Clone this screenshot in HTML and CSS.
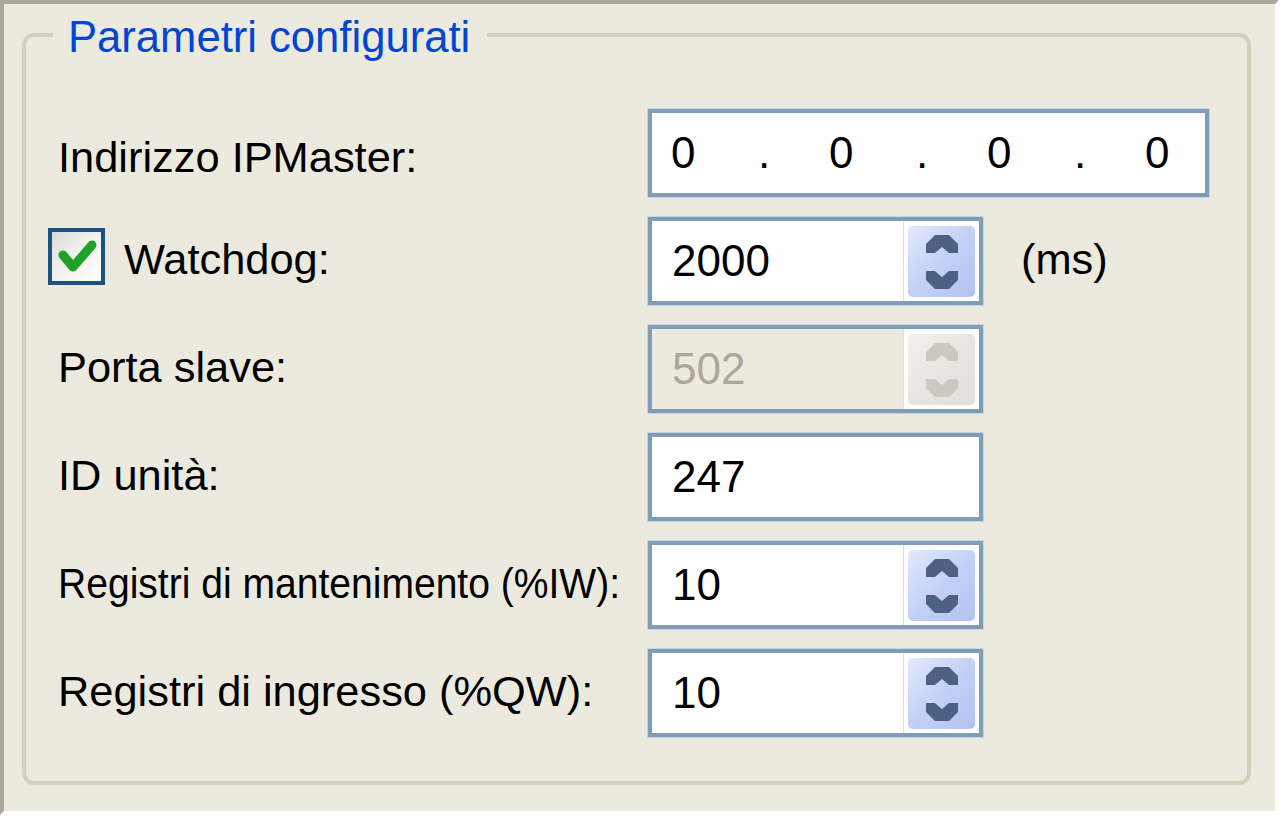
FILE: index.html
```html
<!DOCTYPE html>
<html lang="it">
<head>
    <meta charset="UTF-8">
    <meta name="viewport" content="width=device-width, initial-scale=1.0">
    <title>Parametri configurati</title>
    <link rel="stylesheet" href="styles.css">
</head>
<body>
    <div class="panel">
        <fieldset class="group">
            <legend>Parametri configurati</legend>
            <div class="form">
                <!-- IP master -->
                <div class="label label-first">Indirizzo IPMaster:</div>
                <div class="field field-ip">
                    <span class="octet">0</span><span class="dot">.</span>
                    <span class="octet">0</span><span class="dot">.</span>
                    <span class="octet">0</span><span class="dot">.</span>
                    <span class="octet">0</span>
                </div>

                <!-- watchdog -->
                <div class="label label-check">
                    <span class="checkbox">
                        <svg viewBox="0 0 49 49"><polyline points="11,23 21,35 40,13"/></svg>
                    </span>
                    Watchdog:
                </div>
                <div class="field-row">
                    <div class="field spinner">
                        <div class="field-text">2000</div>
                        <div class="spin">
                            <div class="spin-btn">
                                <svg viewBox="0 0 32 18"><polygon points="0,9 9,0 23,0 32,9 32,18 23,18 16,12 9,18 0,18"/></svg>
                                <svg viewBox="0 0 32 18"><polygon points="0,0 9,0 16,6 23,0 32,0 32,9 23,18 9,18 0,9"/></svg>
                            </div>
                        </div>
                    </div>
                    <span class="unit">(ms)</span>
                </div>

                <!-- porta slave (disabled) -->
                <div class="label">Porta slave:</div>
                <div class="field spinner disabled">
                    <div class="field-text">502</div>
                    <div class="spin">
                        <div class="spin-btn">
                            <svg viewBox="0 0 32 18"><polygon points="0,9 9,0 23,0 32,9 32,18 23,18 16,12 9,18 0,18"/></svg>
                            <svg viewBox="0 0 32 18"><polygon points="0,0 9,0 16,6 23,0 32,0 32,9 23,18 9,18 0,9"/></svg>
                        </div>
                    </div>
                </div>

                <!-- unit id -->
                <div class="label">ID unità:</div>
                <div class="field field-plain">
                    <div class="field-text">247</div>
                </div>

                <!-- holding registers -->
                <div class="label"><span class="label-narrow">Registri di mantenimento (%IW):</span></div>
                <div class="field spinner">
                    <div class="field-text">10</div>
                    <div class="spin">
                        <div class="spin-btn">
                            <svg viewBox="0 0 32 18"><polygon points="0,9 9,0 23,0 32,9 32,18 23,18 16,12 9,18 0,18"/></svg>
                            <svg viewBox="0 0 32 18"><polygon points="0,0 9,0 16,6 23,0 32,0 32,9 23,18 9,18 0,9"/></svg>
                        </div>
                    </div>
                </div>

                <!-- input registers -->
                <div class="label">Registri di ingresso (%QW):</div>
                <div class="field spinner">
                    <div class="field-text">10</div>
                    <div class="spin">
                        <div class="spin-btn">
                            <svg viewBox="0 0 32 18"><polygon points="0,9 9,0 23,0 32,9 32,18 23,18 16,12 9,18 0,18"/></svg>
                            <svg viewBox="0 0 32 18"><polygon points="0,0 9,0 16,6 23,0 32,0 32,9 23,18 9,18 0,9"/></svg>
                        </div>
                    </div>
                </div>
            </div>
        </fieldset>
    </div>
</body>
</html>
```

FILE: styles.css
```css
* {
    box-sizing: border-box;
}
body {
    margin: 0;
    background: #fff;
    font-family: "Liberation Sans", Arial, sans-serif;
    color: #000;
}
.panel {
    width: 1279px;
    height: 815px;
    border: 4px solid transparent;
    border-top-color: #aca899;
    border-left-color: #aca899;
    background: #ece9de;
    background-clip: padding-box;
    padding: 7px 0 0 18px;
}
.group {
    width: 1229px;
    height: 774px;
    margin: 0;
    min-width: 0;
    border: 4px solid #d0d0bf;
    border-radius: 12px;
    padding: 50px 0 0 22px;
}
.group legend {
    font-size: 43.6px;
    line-height: 44px;
    color: #0046d5;
    padding: 4px 17px 0 15px;
    margin-left: 5px;
}
.form {
    display: grid;
    grid-template-columns: 600px auto;
    grid-auto-rows: 88px;
    row-gap: 20px;
    align-items: center;
}
.label {
    font-size: 43.4px;
    line-height: 44px;
    padding: 0 0 4px 10px;
    white-space: nowrap;
}
.label-first {
    padding-bottom: 0;
    padding-top: 8px;
}
.label-narrow {
    display: inline-block;
    transform: scaleX(0.9);
    transform-origin: left center;
}
.label-check {
    display: flex;
    align-items: center;
    gap: 19px;
    padding-left: 0;
}
.checkbox {
    width: 57px;
    height: 57px;
    margin-bottom: 5px;
    border: 4px solid #1c5180;
    background: linear-gradient(135deg, #dcdcd6 0%, #f4f4f1 55%, #fff 100%);
}
.checkbox svg {
    display: block;
    width: 49px;
    height: 49px;
    fill: none;
    stroke: #1fa12a;
    stroke-width: 9;
    stroke-linecap: round;
    stroke-linejoin: round;
}
.field {
    height: 88px;
    border: 4px solid #7f9db9;
    box-shadow: 0 0 0 1px #c9d4df;
    background: #fff;
    display: flex;
    font-size: 44px;
    line-height: 44px;
    justify-self: start;
}
.field-text {
    flex: 1;
    display: flex;
    align-items: center;
    padding-left: 20px;
}
.field-ip {
    width: 561px;
    align-items: center;
    padding-left: 19px;
}
.octet {
    flex: none;
    width: 87px;
}
.octet:last-child {
    width: auto;
}
.dot {
    flex: none;
    width: 71px;
}
.spinner,
.field-plain {
    width: 335px;
}
.field-row {
    display: flex;
    align-items: center;
    gap: 38px;
}
.unit {
    font-size: 43.4px;
    line-height: 44px;
    padding-bottom: 4px;
}
.spin {
    width: 76px;
    border-left: 1px solid #d9e0ec;
    background: #fff;
    padding: 5px 4px 4px;
}
.spin-btn {
    height: 100%;
    border-radius: 5px;
    background: linear-gradient(135deg, #e3eafd 0%, #c3d1f6 50%, #b1c3f2 100%);
    display: flex;
    flex-direction: column;
    align-items: center;
    justify-content: center;
    gap: 18px;
}
.spin-btn svg {
    display: block;
    width: 32px;
    height: 18px;
    fill: #4d6185;
}
.disabled {
    background: #ece9de;
    color: #aca899;
}
.disabled .spin-btn {
    background: linear-gradient(135deg, #f1f0ec 0%, #e6e4df 60%, #e1dfd9 100%);
}
.disabled .spin-btn svg {
    fill: #cbc9bf;
}
```
